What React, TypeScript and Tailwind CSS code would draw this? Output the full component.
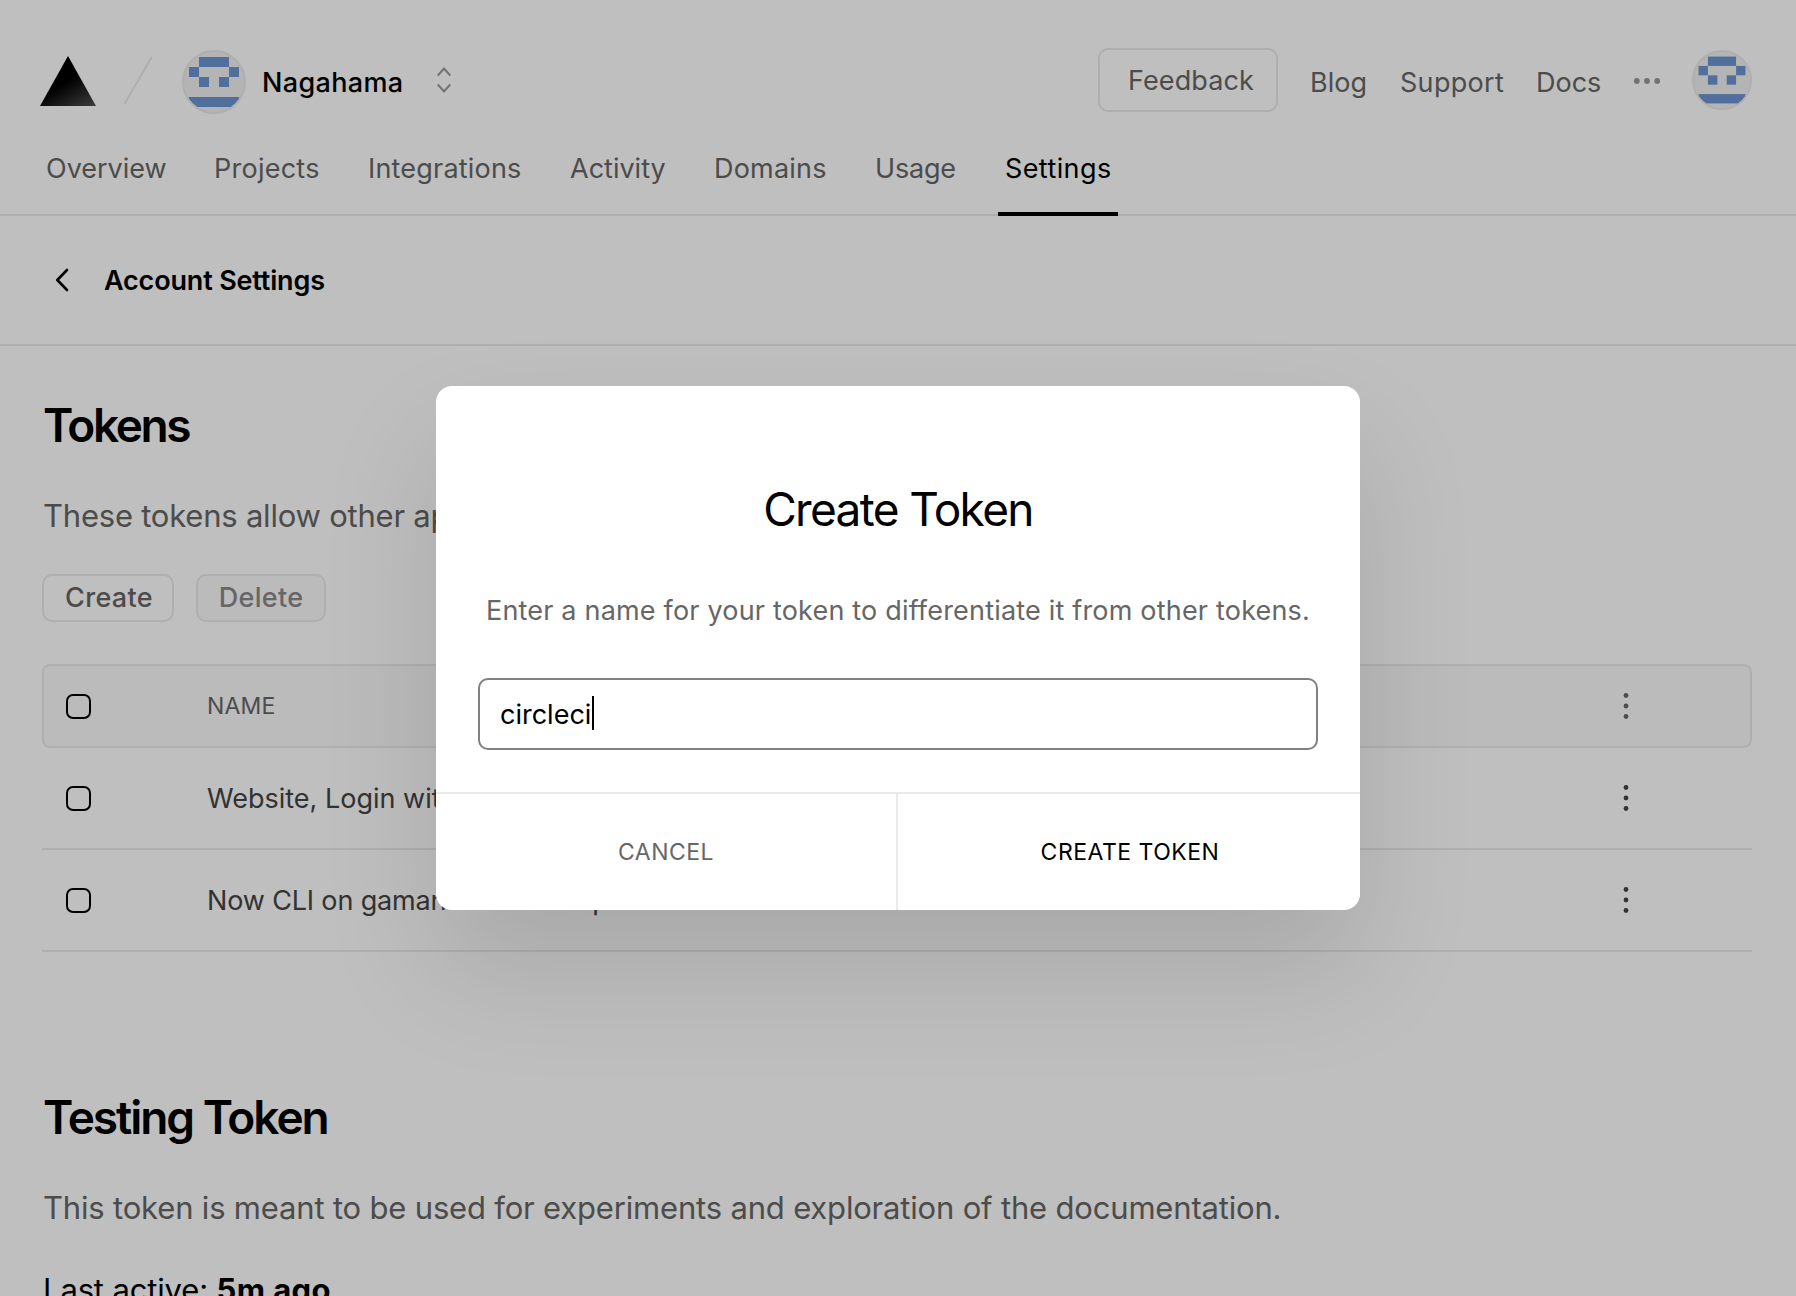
import React from "react";

function Avatar({ size }: { size: number }) {
  return (
    <svg width={size} height={size} viewBox="0 0 64 64" className="shrink-0">
      <defs>
        <clipPath id={`avatar-${size}`}>
          <circle cx="32" cy="32" r="30" />
        </clipPath>
      </defs>
      <circle cx="32" cy="32" r="31" fill="#f0f0f0" stroke="#eaeaea" strokeWidth="2" />
      <g fill="#6c95d0" clipPath={`url(#avatar-${size})`}>
        <rect x="17" y="7" width="30" height="10" />
        <rect x="7" y="17" width="10" height="10" />
        <rect x="47" y="17" width="10" height="10" />
        <rect x="17" y="27" width="10" height="10" />
        <rect x="37" y="27" width="10" height="10" />
        <rect x="7" y="47" width="50" height="10" />
      </g>
    </svg>
  );
}

function Checkbox() {
  return <span className="mt-px block size-[25px] rounded-[7px] border-2 border-black" />;
}

function MoreVertical() {
  return (
    <svg width="6" height="28" viewBox="0 0 6 28" fill="currentColor" className="-mt-px">
      <circle cx="3" cy="3.5" r="2.4" />
      <circle cx="3" cy="14" r="2.4" />
      <circle cx="3" cy="24.5" r="2.4" />
    </svg>
  );
}

const tabs = [
  { label: "Overview", style: "w-[168px]" },
  { label: "Projects", style: "w-[154px] tracking-[0.25px]" },
  { label: "Integrations", style: "w-[202px] tracking-[0.2px]" },
  { label: "Activity", style: "w-[144px]" },
  { label: "Domains", style: "w-[161px] tracking-[0.2px]" },
  { label: "Usage", style: "w-[130px] tracking-[-0.2px]" },
];

const tokens = [
  { name: "Website, Login with GitHub", style: "" },
  { name: "Now CLI on gamanoMacBook-puro", style: "tracking-[-0.15px]" },
];

function Header() {
  return (
    <header className="h-[216px] border-b-2 border-[#eaeaea]">
      <div className="flex h-[120px] items-start pl-10 pr-11 pt-12">
        <svg width="56" height="50" viewBox="0 0 56 50" className="mt-2">
          <defs>
            <linearGradient id="logo" x1="28" y1="24" x2="46" y2="54" gradientUnits="userSpaceOnUse">
              <stop offset="0" stopColor="#000" />
              <stop offset="1" stopColor="#4d4d4d" />
            </linearGradient>
          </defs>
          <path d="M28 0L56 50H0Z" fill="url(#logo)" />
        </svg>
        <svg width="30" height="50" viewBox="0 0 30 50" className="ml-[27px] mt-2">
          <path d="M28.5 1.5L2 47" stroke="#eaeaea" strokeWidth="2" strokeLinecap="round" />
        </svg>
        <div className="ml-[29px] mt-0.5 flex h-16 items-center">
          <Avatar size={64} />
          <span className="ml-4 w-[175px] pt-0.5 text-[27px] font-medium tracking-[0.35px] text-black">Nagahama</span>
          <svg width="14" height="26" viewBox="0 0 14 26" fill="none" stroke="#999" strokeWidth="2" className="-mt-1">
            <path d="M0.8 8.5L7 1.5L13.2 8.5M0.8 17.5L7 24.5L13.2 17.5" />
          </svg>
        </div>
        <div className="ml-auto flex items-start text-[27px] text-[#666]">
          <span className="flex h-16 w-[180px] items-center rounded-[10px] border-2 border-[#eaeaea] pl-7 pt-0.5 tracking-[0.1px]">
            Feedback
          </span>
          <div className="ml-8 mt-0.5 flex h-16 items-center">
            <span className="w-[90px] pt-0.5">Blog</span>
            <span className="w-[136px] pt-0.5 tracking-[0.3px]">Support</span>
            <span className="w-[97px] pt-0.5">Docs</span>
            <svg width="28" height="6" viewBox="0 0 28 6" fill="#999" className="-mt-0.5">
              <circle cx="3.8" cy="3" r="2.9" />
              <circle cx="14" cy="3" r="2.9" />
              <circle cx="24.2" cy="3" r="2.9" />
            </svg>
          </div>
          <div className="ml-[31px] mt-0.5">
            <Avatar size={60} />
          </div>
        </div>
      </div>
      <nav className="flex h-24 pl-[46px] text-[27px] text-[#666]">
        {tabs.map((t) => (
          <span key={t.label} className={`${t.style} h-24 leading-[97px]`}>
            {t.label}
          </span>
        ))}
        <span className="-ml-[7px] h-24 w-[120px] border-b-4 border-black pl-[7px] leading-[97px] tracking-[0.4px] text-black">
          Settings
        </span>
      </nav>
    </header>
  );
}

function TokenTable() {
  return (
    <div className="-ml-0.5 mt-[42px] text-[27px]">
      <div className="flex h-[84px] items-center rounded-lg border-2 border-[#eaeaea] bg-[#fafafa] pl-[22px] text-[#666]">
        <Checkbox />
        <span className="ml-[116px] w-[1416px] text-[23px] tracking-[0.2px]">NAME</span>
        <MoreVertical />
      </div>
      {tokens.map((t) => (
        <div key={t.name} className="flex h-[102px] items-center border-b-2 border-[#eaeaea] pl-6 text-[#444]">
          <Checkbox />
          <span className={`ml-[116px] w-[1416px] pt-0.5 ${t.style}`}>{t.name}</span>
          <MoreVertical />
        </div>
      ))}
    </div>
  );
}

function CreateTokenModal() {
  return (
    <div className="flex h-[524px] w-[924px] flex-col overflow-hidden rounded-2xl bg-white shadow-[0_60px_120px_rgba(0,0,0,0.12)]">
      <div className="flex h-[406px] flex-col items-center px-[42px] pt-[94px]">
        <h2 className="text-[46px] leading-[58px] tracking-[-1.65px] text-black">Create Token</h2>
        <p className="mt-[51px] whitespace-nowrap text-[27px] leading-[43px] tracking-[0.19px] text-[#666]">
          Enter a name for your token to differentiate it from other tokens.
        </p>
        <div className="mt-[46px] flex h-[72px] w-full shrink-0 items-center rounded-[10px] border-2 border-[#808080] pl-5 text-[27px] text-black">
          <span className="pt-0.5">circleci</span>
          <span className="-mt-0.5 ml-px h-[34px] w-0.5 bg-black" />
        </div>
      </div>
      <div className="flex h-[118px] border-t-2 border-[#eaeaea] text-[23px] tracking-[0.5px]">
        <button className="w-[462px] border-r-2 border-[#eaeaea] text-[#666]">CANCEL</button>
        <button className="flex-1 pl-0.5 text-black">CREATE TOKEN</button>
      </div>
    </div>
  );
}

export default function App() {
  return (
    <div className="relative h-[1296px] w-[1796px] overflow-hidden bg-white font-['Inter',sans-serif] antialiased">
      <Header />
      <div className="flex h-[130px] items-center border-b-2 border-[#eaeaea] pl-[55px]">
        <svg width="14" height="24" viewBox="0 0 14 24" fill="none" stroke="#000" strokeWidth="2.6" strokeLinecap="round" strokeLinejoin="round">
          <path d="M12 2L2.3 12L12 22" />
        </svg>
        <span className="ml-[35px] pt-0.5 text-[27px] font-semibold tracking-[-0.17px] text-black">Account Settings</span>
      </div>
      <main className="px-11">
        <h1 className="-ml-px mt-[50px] text-[46px] font-semibold leading-[58px] tracking-[-2.4px] text-black">Tokens</h1>
        <p className="-ml-px mt-[38px] text-[31px] leading-[48px] tracking-[-0.22px] text-[#666]">
          These tokens allow other apps to control your whole account. Be careful!
        </p>
        <div className="-ml-0.5 mt-[34px] flex gap-[22px] text-[27px] font-medium tracking-[0.3px]">
          <span className="flex h-12 w-[132px] items-center justify-center rounded-[10px] border-2 border-[#eaeaea] pl-0.5 pt-px text-[#666]">
            Create
          </span>
          <span className="flex h-12 w-[130px] items-center justify-center rounded-[10px] border-2 border-[#eaeaea] bg-[#fafafa] pt-px text-[#888]">
            Delete
          </span>
        </div>
        <TokenTable />
        <h1 className="-ml-px mt-[136px] text-[46px] font-semibold leading-[58px] tracking-[-2.05px] text-black">Testing Token</h1>
        <p className="-ml-px mt-[38px] text-[31px] leading-[48px] tracking-[-0.18px] text-[#666]">
          This token is meant to be used for experiments and exploration of the documentation.
        </p>
        <p className="-ml-px mt-[34px] text-[31px] leading-[48px] tracking-[-0.15px] text-black">
          Last active: <b className="font-bold tracking-[0.4px]">5m ago</b>
        </p>
      </main>
      <div className="absolute inset-0 flex items-center justify-center bg-black/25">
        <CreateTokenModal />
      </div>
    </div>
  );
}
